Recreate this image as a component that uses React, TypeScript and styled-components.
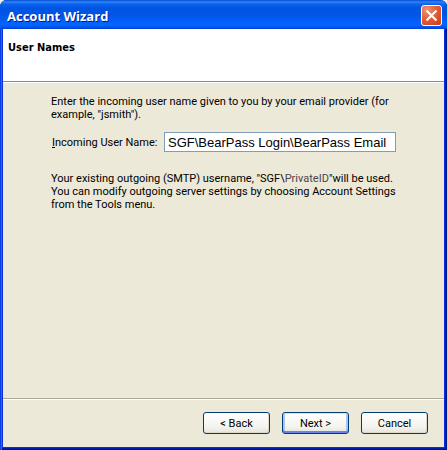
import React from 'react';
import styled, { createGlobalStyle } from 'styled-components';

const GlobalStyle = createGlobalStyle`
  *, *::before, *::after { box-sizing: border-box; }
  body { margin: 0; background: #f4f2e6; }
`;

const ui = `Roboto, "Noto Sans", sans-serif`;

const Frame = styled.main`
  min-height: 100vh;
  display: flex;
  flex-direction: column;
  padding: 0 3px 3px;
  border-radius: 7px 7px 0 0;
  background: #0831d9;
  box-shadow: inset 1px 0 #0b3fe0, inset 2px 0 #1a6af5, inset -1px -1px #00138c, inset -2px -2px #001dad;
  color: #000;
  font: 11px/13px ${ui};
`;

const TitleBar = styled.header`
  display: flex;
  align-items: center;
  justify-content: space-between;
  height: 29px;
  margin: 0 -3px;
  padding: 2px 5px 0 7px;
  border-radius: 7px 7px 0 0;
  background: linear-gradient(
    #0a4ad0 0, #2b86fb 2px, #0a62ee 4px, #0054e3 8px, #0055e5 15px,
    #0261fc 22px, #0266ff 25px, #0058ee 27px, #003dd7 29px
  );
`;

const Title = styled.h1`
  margin: 0;
  color: #fff;
  font: bold 13px/18px "Open Sans", "Noto Sans", sans-serif;
  text-shadow: 1px 1px #0a1883;
`;

const CloseButton = styled.button`
  display: grid;
  place-items: center;
  width: 21px;
  height: 21px;
  padding: 0;
  border: 1px solid #fff;
  border-radius: 3px;
  background: radial-gradient(circle at 25% 20%, #ee9277, #e2603c 45%, #cc3b12 100%);
`;

const Heading = styled.section`
  height: 53px;
  padding: 12px 5px 0;
  background: #fff;
  border-bottom: 1px solid #8b8b7e;
`;

const HeadingText = styled.h2`
  margin: 0;
  font: bold 11px/13px "DejaVu Sans Condensed", "DejaVu Sans", sans-serif;
`;

const Body = styled.section`
  flex: 1;
  padding: 13px 48px 0;
  background: #ece9d8;
  box-shadow: inset 0 1px #fff;
`;

const Paragraph = styled.p`
  margin: 0;
`;

const Muted = styled.span`
  color: #4c4448;
`;

const Field = styled.div`
  display: flex;
  align-items: center;
  margin: 11px 0 20px;
`;

const Label = styled.label`
  flex: 0 0 113px;
  padding-left: 1px;
  white-space: nowrap;
`;

const TextBox = styled.input`
  flex: 1;
  min-width: 0;
  height: 20px;
  padding: 0 3px;
  border: 1px solid #7f9db9;
  border-radius: 0;
  background: #fff;
  color: #000;
  font: 13px "Liberation Sans", Arial, sans-serif;
  outline: none;
`;

const Footer = styled.footer`
  display: flex;
  justify-content: flex-end;
  gap: 12px;
  padding: 13px 16px;
  border-top: 1px solid #aca899;
  box-shadow: inset 0 1px #fff;
  background: #ece9d8;
`;

const Button = styled.button<{ $primary?: boolean }>`
  width: 67px;
  height: 22px;
  padding: 0;
  border: 1px solid #003c74;
  border-radius: 3px;
  background: linear-gradient(#fff, #f3f3ef 70%, #e6e3da);
  box-shadow: ${(p) =>
    p.$primary
      ? 'inset 0 1px #cee7ff, inset 0 -2px #6982ee, inset 2px 0 #a9c4f2, inset -2px 0 #a9c4f2'
      : 'inset -1px -1px #dcd8cc'};
  color: #000;
  font: 11px/13px ${ui};
`;

export default function App() {
  return (
    <>
      <GlobalStyle />
      <Frame>
        <TitleBar>
          <Title>Account Wizard</Title>
          <CloseButton type="button" aria-label="Close">
            <svg width="13" height="13" viewBox="0 0 13 13" aria-hidden="true">
              <path d="M1.5 1.5L11.5 11.5M11.5 1.5L1.5 11.5" stroke="#fff" strokeWidth="2.2" fill="none" />
            </svg>
          </CloseButton>
        </TitleBar>
        <Heading>
          <HeadingText>User Names</HeadingText>
        </Heading>
        <Body>
          <Paragraph>
            Enter the incoming user name given to you by your email provider (for
            <br />
            example, "jsmith").
          </Paragraph>
          <Field>
            <Label htmlFor="incoming-user">
              <u>I</u>ncoming User Name:
            </Label>
            <TextBox
              id="incoming-user"
              type="text"
              defaultValue={'SGF\\BearPass Login\\BearPass Email'}
            />
          </Field>
          <Paragraph>
            Your existing outgoing (SMTP) username, "SGF\<Muted>PrivateID</Muted>"will be used.
            <br />
            You can modify outgoing server settings by choosing Account Settings
            <br />
            from the Tools menu.
          </Paragraph>
        </Body>
        <Footer>
          <Button type="button">&lt; Back</Button>
          <Button type="button" $primary>Next &gt;</Button>
          <Button type="button">Cancel</Button>
        </Footer>
      </Frame>
    </>
  );
}
